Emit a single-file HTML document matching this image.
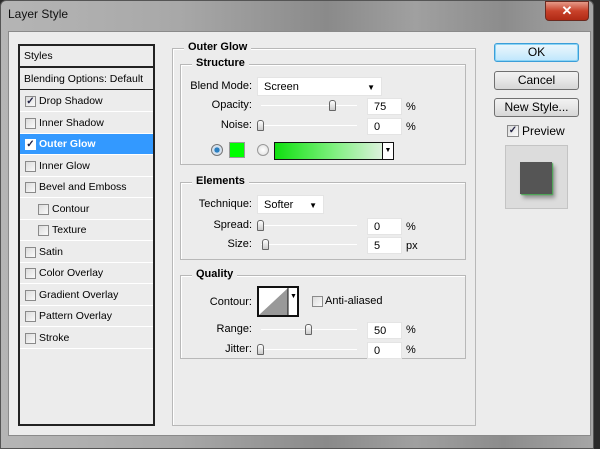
<!DOCTYPE html>
<html><head><style>
*{margin:0;padding:0;box-sizing:border-box}
body{width:600px;height:449px;overflow:hidden;background:#2a2a2a;font-family:"Liberation Sans",sans-serif;font-size:11px;color:#000;position:relative}
.a{position:absolute}
.frame{left:0;top:0;width:594px;height:449px;border-radius:6px 6px 0 0;background:linear-gradient(90deg,#b5b5b5 0%,#a8a8a8 30%,#8a8a8a 55%,#a0a0a0 70%,#8c8c8c 85%,#a6a6a6 100%);border:1px solid #555}
.client{left:8px;top:31px;width:583px;height:405px;background:#ececec;border:1px solid #8a8a8a}
.title{left:8px;top:7px;font-size:12px;color:#111}
.close{left:545px;top:1px;width:44px;height:20px;border-radius:0 0 4px 4px;background:linear-gradient(#e59a88,#c8412a 50%,#b02a15);border:1px solid #6a2a20;color:#fff;font-weight:bold;text-align:center;font-size:13px;line-height:18px}
.lp{left:18px;top:44px;width:137px;height:382px;border:2px solid #222;background:#ececec}
.row{position:absolute;left:0;width:133px;height:21px;border-bottom:1px solid #fff;line-height:21px;padding-left:19px;font-size:10.5px}
.cb{position:absolute;width:11px;height:11px;border:1px solid #8a8a8a;background:linear-gradient(135deg,#dcdcdc,#fafafa);top:5px;left:5px;font-size:10px;line-height:9px;text-align:center;color:#224;font-weight:bold}
.sel{background:#3399ff;color:#fff;font-weight:bold}
.gb{position:absolute;border:1px solid #b8b8b8;box-shadow:inset 1px 1px 0 #fff}
.gl{position:absolute;background:#ececec;font-weight:bold;padding:0 4px}
.lbl{position:absolute;text-align:right;width:90px}
.inp{position:absolute;background:#fff;height:17px;line-height:17px;padding-left:6px;border:1px solid #e4e4e4}
.sl{position:absolute;height:1px;background:#aaa;border-bottom:1px solid #fff}
.th{position:absolute;width:7px;height:11px;border:1px solid #666;border-radius:3px 3px 1px 1px;background:linear-gradient(#fff,#ccc)}
.btn{position:absolute;left:494px;width:85px;height:19px;border:1px solid #707070;border-radius:3px;background:linear-gradient(#f2f2f2,#e6e6e6 50%,#d6d6d6);text-align:center;line-height:17px;font-size:12px}
.u{position:absolute;left:406px}
</style></head><body>
<div class="a frame"></div>
<div class="a title">Layer Style</div>
<div class="a close">✕</div>
<div class="a client"></div>

<div class="a lp">
 <div class="row" style="top:0;height:22px;border-bottom:2px solid #222;padding-left:4px">Styles</div>
 <div class="row" style="top:23px;height:21px;padding-left:4px;border-bottom:1px solid #222">Blending Options: Default</div>
 <div class="row" style="top:45px"><span class="cb">✓</span>Drop Shadow</div>
 <div class="row" style="top:67px"><span class="cb"></span>Inner Shadow</div>
 <div class="row sel" style="top:88px"><span class="cb" style="background:#fff;border-color:#fff">✓</span>Outer Glow</div>
 <div class="row" style="top:110px"><span class="cb"></span>Inner Glow</div>
 <div class="row" style="top:131px"><span class="cb"></span>Bevel and Emboss</div>
 <div class="row" style="top:153px;padding-left:32px"><span class="cb" style="left:18px"></span>Contour</div>
 <div class="row" style="top:174px;padding-left:32px"><span class="cb" style="left:18px"></span>Texture</div>
 <div class="row" style="top:196px"><span class="cb"></span>Satin</div>
 <div class="row" style="top:217px"><span class="cb"></span>Color Overlay</div>
 <div class="row" style="top:239px"><span class="cb"></span>Gradient Overlay</div>
 <div class="row" style="top:260px"><span class="cb"></span>Pattern Overlay</div>
 <div class="row" style="top:282px"><span class="cb"></span>Stroke</div>
</div>

<div class="gb" style="left:172px;top:48px;width:304px;height:378px"></div>
<div class="gl" style="left:184px;top:41px">Outer Glow</div>

<div class="gb" style="left:180px;top:64px;width:286px;height:101px"></div>
<div class="gl" style="left:192px;top:57px">Structure</div>
<div class="lbl" style="left:162px;top:80px">Blend Mode:</div>
<div class="inp" style="left:257px;top:77px;width:125px;height:19px;line-height:19px">Screen<span style="position:absolute;right:6px;font-size:8px">▼</span></div>
<div class="lbl" style="left:162px;top:99px">Opacity:</div>
<div class="sl" style="left:261px;top:105px;width:96px"></div><div class="th" style="left:329px;top:100px"></div>
<div class="inp" style="left:367px;top:98px;width:35px">75</div><div class="u" style="top:101px">%</div>
<div class="lbl" style="left:162px;top:119px">Noise:</div>
<div class="sl" style="left:261px;top:125px;width:96px"></div><div class="th" style="left:257px;top:120px"></div>
<div class="inp" style="left:367px;top:118px;width:35px">0</div><div class="u" style="top:121px">%</div>
<div class="a" style="left:211px;top:144px;width:12px;height:12px;border-radius:50%;border:1px solid #777;background:radial-gradient(#2a7fc0 35%,#cde 40%,#eee)"></div>
<div class="a" style="left:229px;top:142px;width:16px;height:16px;background:#00ff00;border:1px solid #9a9a9a"></div>
<div class="a" style="left:257px;top:144px;width:12px;height:12px;border-radius:50%;border:1px solid #999;background:radial-gradient(#fff,#ddd)"></div>
<div class="a" style="left:274px;top:142px;width:120px;height:18px;border:1px solid #111;background:linear-gradient(90deg,#10e010,#7ff07f 50%,rgba(255,255,255,.6)),#ddd"></div>
<div class="a" style="left:382px;top:142px;width:12px;height:18px;border:1px solid #111;background:#fff;font-size:7px;text-align:center;line-height:16px">▼</div>

<div class="gb" style="left:180px;top:182px;width:286px;height:78px"></div>
<div class="gl" style="left:192px;top:175px">Elements</div>
<div class="lbl" style="left:162px;top:198px">Technique:</div>
<div class="inp" style="left:257px;top:195px;width:67px;height:19px;line-height:19px">Softer<span style="position:absolute;right:6px;font-size:8px">▼</span></div>
<div class="lbl" style="left:162px;top:219px">Spread:</div>
<div class="sl" style="left:261px;top:225px;width:96px"></div><div class="th" style="left:257px;top:220px"></div>
<div class="inp" style="left:367px;top:218px;width:35px">0</div><div class="u" style="top:221px">%</div>
<div class="lbl" style="left:162px;top:238px">Size:</div>
<div class="sl" style="left:261px;top:244px;width:96px"></div><div class="th" style="left:262px;top:239px"></div>
<div class="inp" style="left:367px;top:237px;width:35px">5</div><div class="u" style="top:240px">px</div>

<div class="gb" style="left:180px;top:275px;width:286px;height:84px"></div>
<div class="gl" style="left:192px;top:268px">Quality</div>
<div class="lbl" style="left:162px;top:296px">Contour:</div>
<div class="a" style="left:257px;top:286px;width:42px;height:31px;border:2px solid #111;background:#fff;overflow:hidden">
<svg width="42" height="31" style="position:absolute;left:0;top:0"><polygon points="0,27 29,0 29,27" fill="#999"/><line x1="29" y1="0" x2="29" y2="27" stroke="#111"/></svg>
<span style="position:absolute;left:31px;top:5px;font-size:7px">▼</span></div>
<div class="a" style="left:312px;top:296px;width:11px;height:11px;border:1px solid #8a8a8a;background:linear-gradient(135deg,#dcdcdc,#fafafa)"></div>
<div class="a" style="left:325px;top:295px">Anti-aliased</div>
<div class="lbl" style="left:162px;top:323px">Range:</div>
<div class="sl" style="left:261px;top:329px;width:96px"></div><div class="th" style="left:305px;top:324px"></div>
<div class="inp" style="left:367px;top:322px;width:35px">50</div><div class="u" style="top:324px">%</div>
<div class="lbl" style="left:162px;top:343px">Jitter:</div>
<div class="sl" style="left:261px;top:349px;width:96px"></div><div class="th" style="left:257px;top:344px"></div>
<div class="inp" style="left:367px;top:342px;width:35px">0</div><div class="u" style="top:344px">%</div>

<div class="btn" style="top:43px;border-color:#3c9ed8;box-shadow:inset 0 0 0 1px #8ad4f5;background:linear-gradient(#eaf6fd,#d7effc 50%,#bee6fd)">OK</div>
<div class="btn" style="top:71px">Cancel</div>
<div class="btn" style="top:98px">New Style...</div>
<div class="a" style="left:507px;top:125px;width:12px;height:12px;border:1px solid #8a8a8a;background:linear-gradient(135deg,#dcdcdc,#fafafa);font-size:10px;line-height:10px;text-align:center;font-weight:bold;color:#224">✓</div>
<div class="a" style="left:522px;top:124px;font-size:12px">Preview</div>
<div class="a" style="left:505px;top:145px;width:63px;height:64px;background:#dcdcdc;border:1px solid #c4c4c4"></div>
<div class="a" style="left:520px;top:162px;width:32px;height:32px;background:#555;box-shadow:1px 1px 1px #3fa84a,3px 4px 4px rgba(0,0,0,.35)"></div>
</body></html>
